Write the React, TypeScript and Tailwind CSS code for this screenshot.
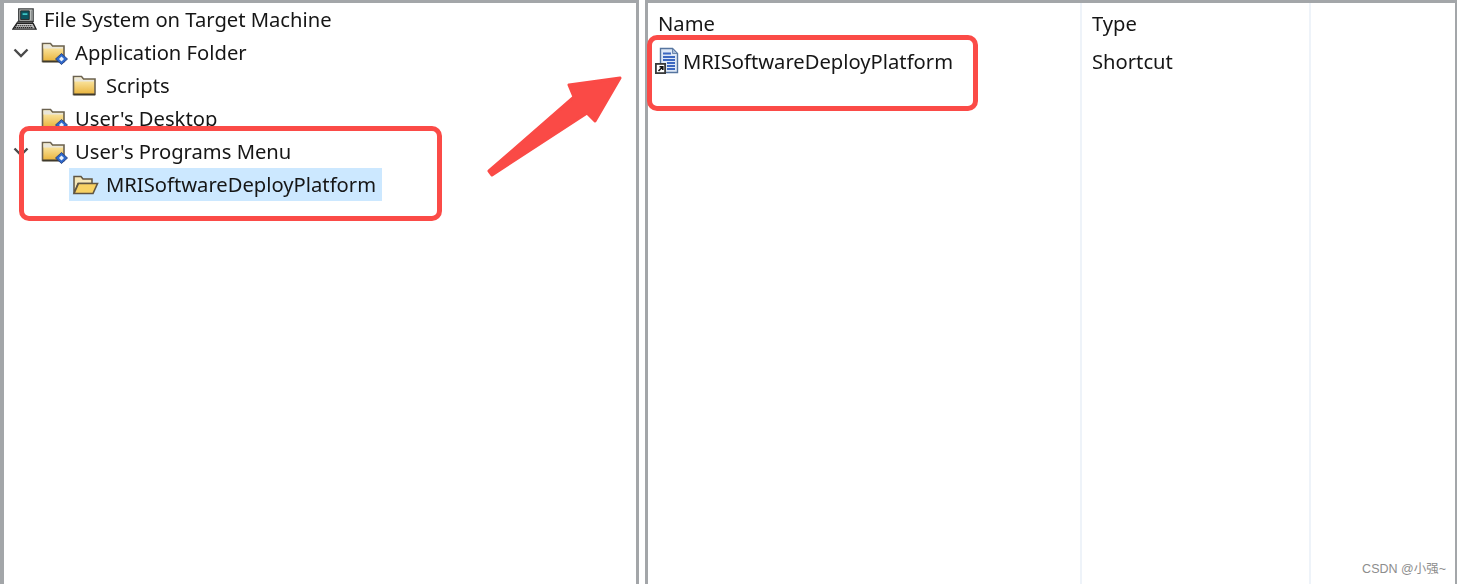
import React from "react";

function Computer() {
  return (
    <svg width="25" height="25" viewBox="0 0 26 26" className="shrink-0">
      <path d="M7 2h15v13H7z" fill="#c9ccc9" stroke="#3c3f40" strokeWidth="1.4" />
      <path d="M9 4h9v9H9z" fill="#0d5560" stroke="#222" strokeWidth="0.9" />
      <path d="M11 6.500h5v1.800h-5z" fill="#3fc4c4" />
      <path d="M19.500 3.500h2v11h-2z" fill="#8f9494" />
      <path d="M6 15h16l-1 2H5z" fill="#77797a" stroke="#333" strokeWidth="1" />
      <path d="M5 17h17l3 6H1z" fill="#c8c8c8" stroke="#222" strokeWidth="1.5" />
      <path d="M4 19.500h17M3 21.500h19" stroke="#222" strokeWidth="1.200" strokeDasharray="1.500 .6" />
    </svg>
  );
}

function Folder({ badge }: { badge?: boolean }) {
  return (
    <svg width="27" height="24" viewBox="0 0 27 24" className="shrink-0">
      <defs>
        <linearGradient id="fold" x1="0" y1="0" x2="0" y2="1">
          <stop offset="0" stopColor="#fff3bd" />
          <stop offset="1" stopColor="#e9b33a" />
        </linearGradient>
      </defs>
      <path d="M1.500 2.500h8l2 2.500h11.500v15.500h-21.500z" fill="url(#fold)" stroke="#6b6250" strokeWidth="1.600" />
      <path d="M2.500 3.500h6.500l2 2.500h11v1.500h-19.500z" fill="#e9e6da" />
      <path d="M1.500 20.500h21.500" stroke="#3f3a2c" strokeWidth="1.800" />
      {badge && (
        <g>
          <path d="M20.500 12.500l6 5.500-6 5.500-6-5.500z" fill="#2e67c9" stroke="#24407f" strokeWidth="0.9" />
          <path d="M20.500 15.500l2.500 2.500-2.500 2.500-2.500-2.500z" fill="#e8f1fc" />
        </g>
      )}
    </svg>
  );
}

function OpenFolder() {
  return (
    <svg width="27" height="24" viewBox="0 0 27 24" className="shrink-0">
      <path d="M2 3.500h7l2 2.500h9v4.500H6l-4 10z" fill="#f6e8b8" stroke="#5f5543" strokeWidth="1.500" />
      <path d="M6.500 10.500h19l-4.500 10H2z" fill="#f8d264" stroke="#5f5543" strokeWidth="1.600" />
    </svg>
  );
}

function ShortcutDoc() {
  return (
    <svg width="26" height="28" viewBox="0 0 26 28" className="shrink-0">
      <path d="M6.500 1.500h12l5 5v19h-17z" fill="#dfe9f7" stroke="#56759f" strokeWidth="1.400" />
      <path d="M18.500 1.500v5h5z" fill="#a9bcd8" stroke="#56759f" strokeWidth="0.8" />
      <path d="M9 6.500h8M9 10h12M9 13h12M13 16h8M13 19h8M13 22h8" stroke="#3d68c0" strokeWidth="2" />
      <path d="M1 16h11v11H1z" fill="#3a3a3a" />
      <path d="M2.800 17.800h7.400v7.400H2.800z" fill="#fff" />
      <path d="M4.500 24l4-4M5.500 19.800h3.300v3.300" fill="none" stroke="#111" strokeWidth="1.600" />
    </svg>
  );
}

function Chevron() {
  return (
    <svg width="16" height="10" viewBox="0 0 16 10" className="shrink-0">
      <path d="M1.500 1.500l6.500 6.500 6.500-6.500" fill="none" stroke="#4a4a4a" strokeWidth="2.400" />
    </svg>
  );
}

function Row({ indent, chevron, icon, label, selected }: { indent: string; chevron?: boolean; icon: React.ReactNode; label: string; selected?: boolean }) {
  return (
    <div className={`h-[33px] flex items-center ${indent}`}>
      {chevron && <span className="w-[30px] flex pl-[2px]"><Chevron /></span>}
      <span className={`flex items-center h-[33px] ${selected ? "bg-[#cce8ff] pr-[6px]" : ""}`}>
        {icon}
        <span className="ml-[7px] whitespace-nowrap">{label}</span>
      </span>
    </div>
  );
}

export default function App() {
  return (
    <div className="relative w-[1460px] h-[584px] overflow-hidden bg-white flex text-[20.2px] text-[#161616] font-['Noto_Sans','Open_Sans',sans-serif]">
      <div className="w-[639px] h-full border-t-[3px] border-l-[4px] border-r-[3px] border-[#a3a6a9] bg-white pl-[7px] blur-[0.6px]">
        <Row indent="pl-[1px]" icon={<Computer />} label="File System on Target Machine" />
        <Row indent="pl-0" chevron icon={<Folder badge />} label="Application Folder" />
        <Row indent="pl-[61px]" icon={<Folder />} label="Scripts" />
        <Row indent="pl-[30px]" icon={<Folder badge />} label="User's Desktop" />
        <Row indent="pl-0" chevron icon={<Folder badge />} label="User's Programs Menu" />
        <Row indent="pl-[58px]" selected icon={<span className="pl-[3px] flex"><OpenFolder /></span>} label="MRISoftwareDeployPlatform" />
      </div>
      <div className="w-[6px] h-full bg-white" />
      <div className="w-[812px] h-full border-t-[3px] border-l-[3px] border-r-[2px] border-[#a3a6a9] bg-white flex blur-[0.6px]">
        <div className="w-[434px] h-full border-r-[2px] border-[#eef3f9] pl-[10px]">
          <div className="h-[40px] flex items-center">Name</div>
          <div className="h-[36px] flex items-center -ml-[4px]">
            <ShortcutDoc />
            <span className="ml-[3px] whitespace-nowrap">MRISoftwareDeployPlatform</span>
          </div>
        </div>
        <div className="w-[229px] h-full border-r-[2px] border-[#eef3f9] pl-[10px]">
          <div className="h-[40px] flex items-center">Type</div>
          <div className="h-[36px] flex items-center">Shortcut</div>
        </div>
      </div>

      <div className="absolute left-[19px] top-[126px] w-[423px] h-[95px] border-[5px] border-[#fb4b47] rounded-[10px]" />
      <div className="absolute left-[647px] top-[35px] w-[331px] h-[76px] border-[5px] border-[#fb4b47] rounded-[10px]" />
      <svg className="absolute left-[480px] top-[70px]" width="150" height="110" viewBox="0 0 150 110">
        <path d="M9 101L94 27 89 15 140 8 115 51 107 43 12 105z" fill="#fa4a46" stroke="#fa4a46" strokeWidth="3" strokeLinejoin="round" />
      </svg>
      <div className="absolute right-[14px] top-[560px] text-[12.5px] text-[#8d8d8d] font-['Liberation_Sans','Noto_Sans_CJK_SC',sans-serif] whitespace-nowrap">CSDN @小强~</div>
    </div>
  );
}
